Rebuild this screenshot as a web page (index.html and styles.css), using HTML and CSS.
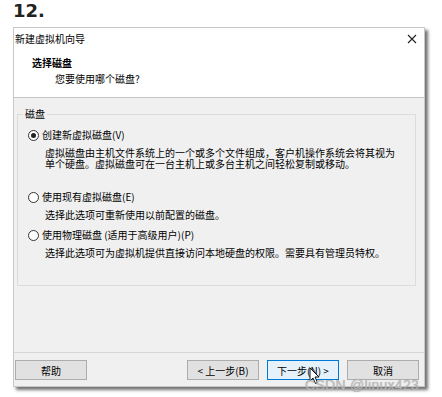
FILE: index.html
```html
<!DOCTYPE html>
<html lang="zh-CN">
<head>
  <meta charset="UTF-8">
  <meta name="viewport" content="width=device-width, initial-scale=1.0">
  <title>新建虚拟机向导</title>
  <link rel="stylesheet" href="styles.css">
</head>
<body>
  <h1 class="step">12.</h1>

  <div class="dialog">
    <div class="titlebar">
      <span class="title">新建虚拟机向导</span>
      <svg class="close" width="10" height="10" viewBox="0 0 10 10">
        <path d="M1 1 L9 9 M9 1 L1 9" stroke="#222" stroke-width="1.1" fill="none"/>
      </svg>
    </div>

    <div class="header">
      <div class="header-title">选择磁盘</div>
      <div class="header-sub">您要使用哪个磁盘?</div>
    </div>

    <div class="body">
      <fieldset class="group">
        <legend>磁盘</legend>

        <div class="option first">
          <span class="radio checked"></span>创建新虚拟磁盘(V)
        </div>
        <div class="desc">
          <p>虚拟磁盘由主机文件系统上的一个或多个文件组成，客户机操作系统会将其视为</p>
          <p>单个硬盘。虚拟磁盘可在一台主机上或多台主机之间轻松复制或移动。</p>
        </div>

        <div class="option second">
          <span class="radio"></span>使用现有虚拟磁盘(E)
        </div>
        <div class="desc">选择此选项可重新使用以前配置的磁盘。</div>

        <div class="option">
          <span class="radio"></span>使用物理磁盘 (适用于高级用户)(P)
        </div>
        <div class="desc">选择此选项可为虚拟机提供直接访问本地硬盘的权限。需要具有管理员特权。</div>
      </fieldset>
    </div>

    <div class="footer">
      <button class="btn">帮助</button>
      <div class="nav">
        <button class="btn">&lt; 上一步(B)</button>
        <button class="btn default">下一步(N) &gt;</button>
        <button class="btn">取消</button>
      </div>
    </div>
  </div>

  <svg class="cursor" width="12" height="18" viewBox="0 0 12 18">
    <path d="M1 1 L1 14 L4 11 L6.5 16.5 L8.5 15.5 L6 10 L10 10 Z" fill="#fff" stroke="#111" stroke-width="1"/>
  </svg>
  <div class="watermark">CSDN @linux423</div>
</body>
</html>
```

FILE: styles.css
```css
* {
  margin: 0;
  padding: 0;
  box-sizing: border-box;
}

body {
  background: #fff;
  font-family: "Noto Sans CJK SC", "Microsoft YaHei", sans-serif;
  font-size: 10px;
  color: #000;
  position: relative;
  width: 442px;
  height: 397px;
  overflow: hidden;
}

.step {
  font-family: "DejaVu Sans", Verdana, sans-serif;
  font-size: 18px;
  font-weight: bold;
  color: #222;
  line-height: 20px;
  padding: 1px 0 0 13px;
  height: 27px;
}

.dialog {
  margin-left: 13px;
  width: 412px;
  height: 360px;
  background: #f0f0f0;
  border: 1px solid #c8c8c8;
  box-shadow: 3px 3px 3px rgba(0, 0, 0, 0.55);
  display: flex;
  flex-direction: column;
}

.titlebar {
  height: 20px;
  background: #fff;
  display: flex;
  align-items: center;
  justify-content: space-between;
  padding: 0 7px 0 1px;
}

.title {
  line-height: 12px;
  margin-top: 2px;
}

.close {
  margin-top: 1px;
}

.header {
  height: 50px;
  background: #fff;
  border-bottom: 1px solid #c4c4c4;
  padding: 8px 0 0 18px;
}

.header-title {
  font-weight: bold;
  line-height: 14px;
}

.header-sub {
  line-height: 14px;
  margin-top: 2px;
  padding-left: 23px;
}

.body {
  flex: 1;
  padding: 10px 8px 0 3px;
}

.group {
  border: 1px solid #dcdcdc;
  height: 178px;
  padding: 0;
}

.group legend {
  margin-left: 5px;
  padding: 0 2px;
  line-height: 12px;
}

.option {
  display: flex;
  align-items: center;
  height: 14px;
  line-height: 14px;
  margin-top: 8px;
  padding-left: 10px;
}

.option.first {
  margin-top: 8px;
}

.option.second {
  margin-top: 21px;
}

.radio {
  width: 11px;
  height: 11px;
  border: 1px solid #333;
  border-radius: 50%;
  background: #fff;
  margin-right: 3px;
  display: flex;
  align-items: center;
  justify-content: center;
}

.radio.checked::after {
  content: '';
  width: 5px;
  height: 5px;
  border-radius: 50%;
  background: #222;
}

.desc {
  line-height: 11px;
  margin-top: 5px;
  padding-left: 27px;
  white-space: nowrap;
}

.footer {
  height: 34px;
  border-top: 1px solid #d6d6d6;
  display: flex;
  justify-content: space-between;
  padding: 7px 5px 0 1px;
}

.nav {
  display: flex;
  gap: 8px;
}

.btn {
  width: 72px;
  height: 20px;
  background: #e1e1e1;
  border: 1px solid #adadad;
  font-family: inherit;
  font-size: 10px;
  color: #000;
}

.btn.default {
  background: #e5f1fb;
  border-color: #0078d7;
}

.cursor {
  position: absolute;
  left: 309px;
  top: 367px;
}

.watermark {
  position: absolute;
  left: 305px;
  top: 377px;
  font-family: "Liberation Sans", Arial, sans-serif;
  font-size: 14px;
  letter-spacing: 0.3px;
  color: rgba(190, 190, 190, 0.85);
  text-shadow: 0 0 1px rgba(120, 120, 120, 0.6);
}
```
